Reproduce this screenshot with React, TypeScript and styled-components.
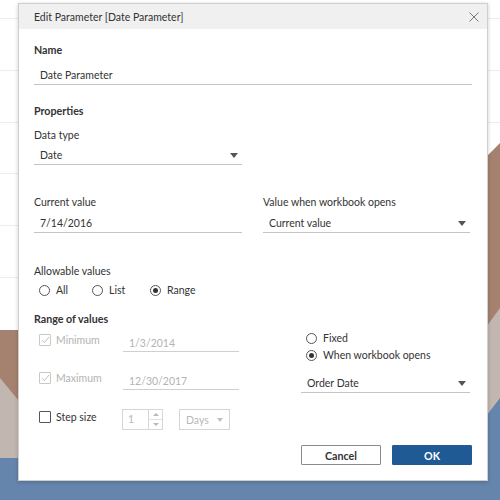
import styled, { createGlobalStyle } from "styled-components";

const GlobalStyle = createGlobalStyle`
  html, body {
    margin: 0;
    padding: 0;
    background: #ffffff;
  }
  body {
    font-family: Lato, "Liberation Sans", sans-serif;
    color: #333333;
  }
`;

const Page = styled.div`
  position: relative;
  width: 500px;
  height: 500px;
  overflow: hidden;
`;

const Backdrop = styled.svg`
  position: absolute;
  inset: 0;
`;

const Dialog = styled.div`
  position: absolute;
  left: 18px;
  top: 3px;
  width: 468px;
  background: #ffffff;
  border: 1px solid #cfcfcf;
  box-shadow: 0 1px 4px rgba(0, 0, 0, 0.2);
`;

const Header = styled.div`
  height: 25px;
  background: #f0f0f0;
  display: flex;
  align-items: center;
  justify-content: space-between;
  padding: 0 7px 0 15px;
`;

const Title = styled.span`
  font-size: 10.5px;
  color: #333;
`;

const CloseButton = styled.button`
  border: 0;
  background: none;
  padding: 0;
  width: 12px;
  height: 12px;
  display: flex;
  align-items: center;
  justify-content: center;
`;

const Body = styled.div`
  padding: 13px 15px 15px 15px;
  display: flex;
  flex-direction: column;
`;

const SectionTitle = styled.div<{ $mt?: number }>`
  font-size: 10.7px;
  font-weight: 700;
  line-height: 16px;
  margin-top: ${({ $mt }) => $mt ?? 0}px;
`;

const Label = styled.div<{ $mt?: number }>`
  font-size: 10.5px;
  line-height: 16px;
  color: #333;
  margin-top: ${({ $mt }) => $mt ?? 0}px;
`;

const TextField = styled.div<{ $mt?: number; $disabled?: boolean; $pad?: number }>`
  height: 20px;
  line-height: 16px;
  box-sizing: border-box;
  padding: ${({ $pad }) => $pad ?? 2}px 0 0 6px;
  font-size: 10.5px;
  color: ${({ $disabled }) => ($disabled ? "#b3b3b3" : "#333")};
  border-bottom: 1px solid ${({ $disabled }) => ($disabled ? "#cfcfcf" : "#c4c4c4")};
  margin-top: ${({ $mt }) => $mt ?? 0}px;
`;

const SelectField = styled(TextField)`
  display: flex;
  align-items: flex-start;
  justify-content: space-between;
  padding-right: 4px;
`;

const Caret = styled.span<{ $color?: string }>`
  width: 0;
  height: 0;
  margin-top: 6px;
  border-left: 4px solid transparent;
  border-right: 4px solid transparent;
  border-top: 5px solid ${({ $color }) => $color ?? "#555"};
`;

const Half = styled.div<{ $width: number }>`
  width: ${({ $width }) => $width}px;
`;

const DateRow = styled.div`
  display: grid;
  grid-template-columns: 208px 207px;
  column-gap: 21px;
  margin-top: 29px;
`;

const RadioGroup = styled.div<{ $direction?: "row" | "column"; $mt?: number }>`
  display: flex;
  flex-direction: ${({ $direction }) => $direction ?? "row"};
  gap: ${({ $direction }) => ($direction === "column" ? "1px" : "0")};
  margin-top: ${({ $mt }) => $mt ?? 0}px;
`;

const RadioOption = styled.label<{ $width?: number }>`
  display: flex;
  align-items: center;
  gap: 6px;
  height: 16px;
  font-size: 10.5px;
  color: #333;
  width: ${({ $width }) => ($width ? `${$width}px` : "auto")};
  padding-left: 5px;
  box-sizing: border-box;
`;

const RadioCircle = styled.span<{ $checked?: boolean }>`
  width: 11px;
  height: 11px;
  box-sizing: border-box;
  border: 1px solid #555;
  border-radius: 50%;
  display: flex;
  align-items: center;
  justify-content: center;
  &::after {
    content: "";
    width: 5px;
    height: 5px;
    border-radius: 50%;
    background: #333;
    display: ${({ $checked }) => ($checked ? "block" : "none")};
  }
`;

const RangeGrid = styled.div`
  display: grid;
  grid-template-columns: 208px 169px;
  column-gap: 59px;
`;

const RangeLeft = styled.div`
  display: flex;
  flex-direction: column;
  padding-top: 5px;
`;

const RangeRow = styled.div<{ $mt?: number }>`
  display: grid;
  grid-template-columns: 89px 116px;
  align-items: start;
  margin-top: ${({ $mt }) => $mt ?? 0}px;
`;

const CheckLabel = styled.div<{ $disabled?: boolean }>`
  display: flex;
  align-items: center;
  gap: 5px;
  height: 16px;
  padding-left: 5px;
  font-size: 10.5px;
  color: ${({ $disabled }) => ($disabled ? "#b3b3b3" : "#333")};
`;

const CheckBox = styled.span<{ $disabled?: boolean }>`
  width: 12px;
  height: 12px;
  box-sizing: border-box;
  border: 1px solid ${({ $disabled }) => ($disabled ? "#c8c8c8" : "#555")};
  border-radius: 1px;
  display: flex;
  align-items: center;
  justify-content: center;
`;

const RangeRight = styled.div`
  display: flex;
  flex-direction: column;
  padding-top: 3px;
`;

const StepControls = styled.div`
  display: flex;
  gap: 16px;
  margin-left: -1px;
`;

const Spinner = styled.div`
  width: 41px;
  height: 21px;
  box-sizing: border-box;
  border: 1px solid #d6d6d6;
  display: flex;
`;

const SpinnerValue = styled.div`
  flex: 1;
  font-size: 10.5px;
  color: #b8b8b8;
  line-height: 19px;
  padding-left: 5px;
`;

const SpinnerArrows = styled.div`
  width: 13px;
  border-left: 1px solid #d6d6d6;
  display: flex;
  flex-direction: column;
`;

const SpinnerArrow = styled.div<{ $up?: boolean }>`
  flex: 1;
  display: flex;
  align-items: center;
  justify-content: center;
  border-top: ${({ $up }) => ($up ? "0" : "1px solid #e2e2e2")};
  &::after {
    content: "";
    width: 0;
    height: 0;
    border-left: 3px solid transparent;
    border-right: 3px solid transparent;
    ${({ $up }) =>
      $up ? "border-bottom: 3px solid #b8b8b8;" : "border-top: 3px solid #b8b8b8;"}
  }
`;

const UnitSelect = styled.div`
  width: 51px;
  height: 21px;
  box-sizing: border-box;
  border: 1px solid #d6d6d6;
  display: flex;
  align-items: center;
  justify-content: space-between;
  padding: 0 6px 0 6px;
  font-size: 10.5px;
  color: #b8b8b8;
`;

const SmallCaret = styled.span`
  width: 0;
  height: 0;
  border-left: 3.5px solid transparent;
  border-right: 3.5px solid transparent;
  border-top: 4px solid #c0c0c0;
`;

const Footer = styled.div`
  display: flex;
  justify-content: flex-end;
  gap: 11px;
  margin-top: 15px;
`;

const Button = styled.button<{ $primary?: boolean }>`
  width: 80px;
  height: 20px;
  box-sizing: border-box;
  font-family: inherit;
  font-size: 10.7px;
  font-weight: 700;
  border-radius: 1px;
  border: 1px solid ${({ $primary }) => ($primary ? "#1f5a94" : "#8a8a8a")};
  background: ${({ $primary }) => ($primary ? "#1f5a94" : "#ffffff")};
  color: ${({ $primary }) => ($primary ? "#ffffff" : "#333")};
  padding: 0;
`;

const Tick = () => (
  <svg width="9" height="8" viewBox="0 0 9 8">
    <path d="M1 4.2 L3.4 6.6 L8 1" fill="none" stroke="#bdbdbd" strokeWidth="1" />
  </svg>
);

const gridLines = [18.5, 70.5, 122.5, 173.5, 225.5, 277.5];

export default function App() {
  return (
    <Page>
      <GlobalStyle />
      <Backdrop width="500" height="500" viewBox="0 0 500 500">
        {gridLines.map((y) => (
          <line key={y} x1="0" x2="500" y1={y} y2={y} stroke="#ececec" strokeWidth="1" />
        ))}
        <polygon points="0,330 19,330 487,156 500,143 500,500 0,500" fill="#a5826f" />
        <polygon points="0,378 19,401 487,326 500,308 500,500 0,500" fill="#c2b6b0" />
        <polygon points="0,458 19,458 487,415 500,398 500,500 0,500" fill="#6585ac" />
      </Backdrop>
      <Dialog>
        <Header>
          <Title>Edit Parameter [Date Parameter]</Title>
          <CloseButton aria-label="Close">
            <svg width="10" height="10" viewBox="0 0 10 10">
              <path d="M0.5 0.5 L9.5 9.5 M9.5 0.5 L0.5 9.5" stroke="#777" strokeWidth="1" />
            </svg>
          </CloseButton>
        </Header>
        <Body>
          <SectionTitle>Name</SectionTitle>
          <TextField $mt={7}>Date Parameter</TextField>

          <SectionTitle $mt={18}>Properties</SectionTitle>
          <Label $mt={8}>Data type</Label>
          <Half $width={208}>
            <SelectField $mt={2}>
              Date
              <Caret />
            </SelectField>
          </Half>

          <DateRow>
            <div>
              <Label>Current value</Label>
              <TextField $mt={3}>7/14/2016</TextField>
            </div>
            <div>
              <Label>Value when workbook opens</Label>
              <SelectField $mt={3}>
                Current value
                <Caret />
              </SelectField>
            </div>
          </DateRow>

          <Label $mt={30}>Allowable values</Label>
          <RadioGroup $mt={3}>
            <RadioOption $width={53}>
              <RadioCircle />
              All
            </RadioOption>
            <RadioOption $width={58}>
              <RadioCircle />
              List
            </RadioOption>
            <RadioOption>
              <RadioCircle $checked />
              Range
            </RadioOption>
          </RadioGroup>

          <SectionTitle $mt={13}>Range of values</SectionTitle>
          <RangeGrid>
            <RangeLeft>
              <RangeRow>
                <CheckLabel $disabled>
                  <CheckBox $disabled>
                    <Tick />
                  </CheckBox>
                  Minimum
                </CheckLabel>
                <TextField $disabled $pad={3}>1/3/2014</TextField>
              </RangeRow>
              <RangeRow $mt={18}>
                <CheckLabel $disabled>
                  <CheckBox $disabled>
                    <Tick />
                  </CheckBox>
                  Maximum
                </CheckLabel>
                <TextField $disabled $pad={3}>12/30/2017</TextField>
              </RangeRow>
              <RangeRow $mt={19}>
                <CheckLabel>
                  <CheckBox />
                  Step size
                </CheckLabel>
                <StepControls>
                  <Spinner>
                    <SpinnerValue>1</SpinnerValue>
                    <SpinnerArrows>
                      <SpinnerArrow $up />
                      <SpinnerArrow />
                    </SpinnerArrows>
                  </Spinner>
                  <UnitSelect>
                    Days
                    <SmallCaret />
                  </UnitSelect>
                </StepControls>
              </RangeRow>
            </RangeLeft>
            <RangeRight>
              <RadioGroup $direction="column">
                <RadioOption>
                  <RadioCircle />
                  Fixed
                </RadioOption>
                <RadioOption>
                  <RadioCircle $checked />
                  When workbook opens
                </RadioOption>
              </RadioGroup>
              <SelectField $mt={10}>
                Order Date
                <Caret />
              </SelectField>
            </RangeRight>
          </RangeGrid>

          <Footer>
            <Button>Cancel</Button>
            <Button $primary>OK</Button>
          </Footer>
        </Body>
      </Dialog>
    </Page>
  );
}
